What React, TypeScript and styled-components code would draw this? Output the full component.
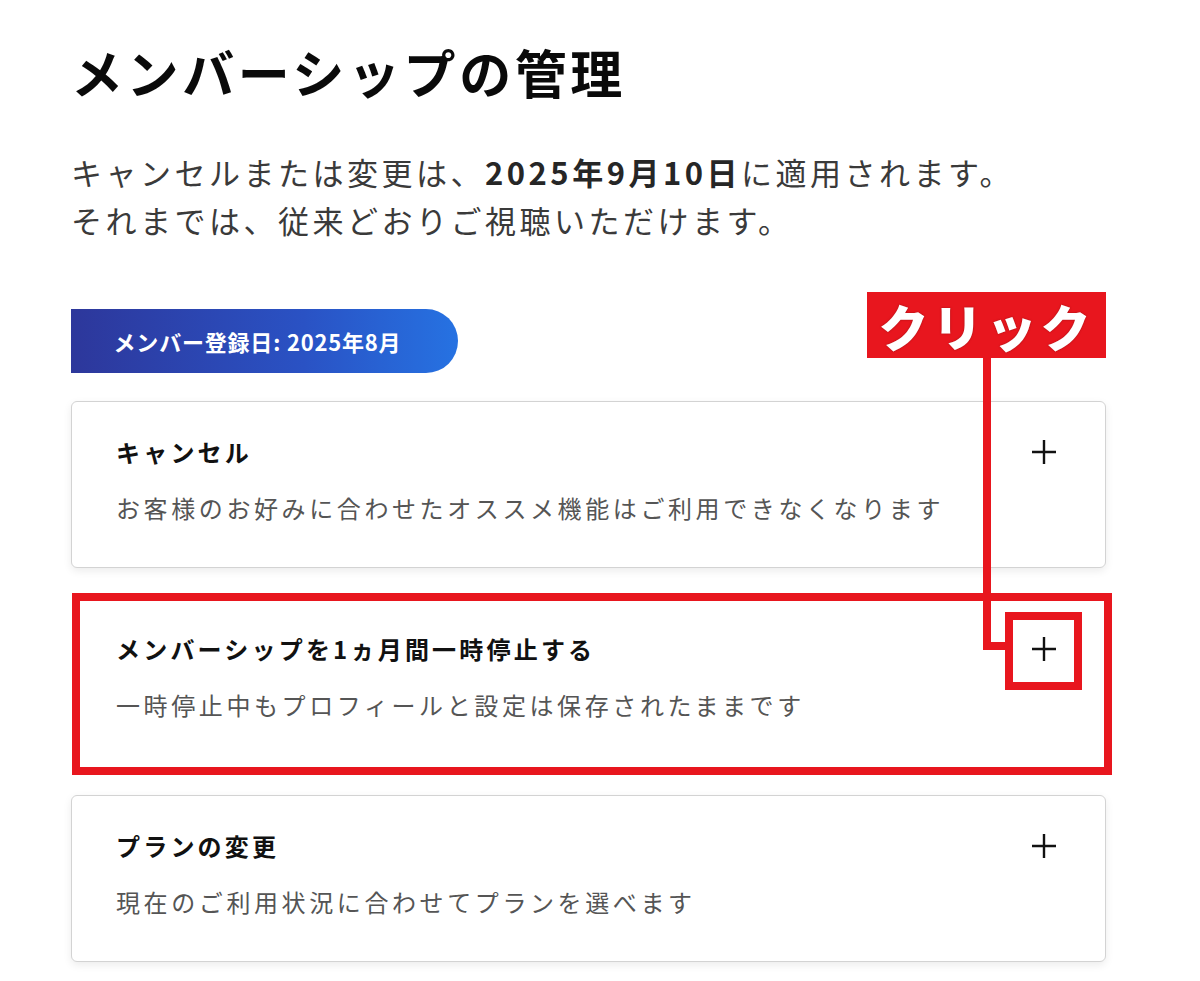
import React from 'react';
import styled, { createGlobalStyle } from 'styled-components';

const GlobalStyle = createGlobalStyle`
  html, body {
    margin: 0;
    padding: 0;
    background: #ffffff;
  }
  body {
    font-family: "Noto Sans CJK JP", "Noto Sans", sans-serif;
    color: #111;
  }
`;

const red = '#e8161e';

const Page = styled.div`
  width: 1035px;
  padding: 34px 0 40px 71px;
  position: relative;
`;

const Title = styled.h1`
  margin: 0;
  font-size: 52px;
  line-height: 76px;
  font-weight: 700;
  letter-spacing: 3.6px;
  color: #0a0a0a;
`;

const Lead = styled.p`
  margin: 38px 0 0;
  font-size: 31px;
  line-height: 48px;
  letter-spacing: 3.5px;
  color: #3a3a3a;

  strong {
    font-weight: 700;
    color: #262626;
  }
`;

const BadgeRow = styled.div`
  display: flex;
  justify-content: space-between;
  align-items: flex-start;
  margin-top: 65px;
`;

const Badge = styled.div`
  width: 387px;
  height: 64px;
  display: flex;
  align-items: center;
  justify-content: center;
  border-radius: 0 32px 32px 0;
  background: linear-gradient(90deg, #2d379b 0%, #2a52c4 60%, #2672e2 100%);
  color: #fff;
  font-size: 22px;
  font-weight: 700;
  letter-spacing: 0.8px;
  box-sizing: border-box;
  padding-right: 14px;
`;

const ClickLabel = styled.div`
  margin-top: -17px;
  width: 239px;
  height: 66px;
  background: ${red};
  color: #fff;
  font-size: 50px;
  font-weight: 900;
  line-height: 66px;
  letter-spacing: 4px;
  text-align: center;
  text-shadow: 0 0 2px rgba(80, 0, 0, 0.5);
`;

const List = styled.div`
  position: relative;
  display: flex;
  flex-direction: column;
  gap: 30px;
  margin-top: 28px;
`;

const Card = styled.div<{ $highlight?: boolean }>`
  position: relative;
  display: flex;
  justify-content: space-between;
  align-items: flex-start;
  height: 167px;
  box-sizing: border-box;
  padding: 32px 48px 0 44px;
  background: #fff;
  border: 1px solid ${(p) => (p.$highlight ? 'transparent' : '#d3d3d3')};
  border-radius: 6px;
  box-shadow: ${(p) => (p.$highlight ? 'none' : '0 3px 8px rgba(0, 0, 0, 0.08)')};

  ${(p) =>
    p.$highlight &&
    `
    &::after {
      content: '';
      position: absolute;
      top: -6px;
      left: 0;
      right: -7px;
      bottom: -11px;
      border: 8px solid ${red};
      pointer-events: none;
    }
  `}
`;

const CardText = styled.div`
  display: flex;
  flex-direction: column;
  gap: 20px;
`;

const CardTitle = styled.div`
  font-size: 24px;
  line-height: 36px;
  font-weight: 700;
  letter-spacing: 3.2px;
  color: #111;
`;

const CardDesc = styled.div`
  font-size: 24px;
  line-height: 36px;
  letter-spacing: 3.6px;
  color: #555;
`;

const PlusButton = styled.div<{ $highlight?: boolean }>`
  position: relative;
  width: 26px;
  height: 26px;
  margin-top: 5px;

  ${(p) =>
    p.$highlight &&
    `
    &::after {
      content: '';
      position: absolute;
      left: -26px;
      top: -24px;
      width: 77px;
      height: 78px;
      box-sizing: border-box;
      border: 8px solid ${red};
    }
  `}
`;

const ConnectorV = styled.div`
  position: absolute;
  left: 912px;
  top: -43px;
  width: 8px;
  height: 292px;
  background: ${red};
  z-index: 2;
`;

const ConnectorH = styled.div`
  position: absolute;
  left: 912px;
  top: 241px;
  width: 24px;
  height: 8px;
  background: ${red};
  z-index: 2;
`;

const Plus = () => (
  <svg width="26" height="26" viewBox="0 0 26 26">
    <path d="M13 1v24M1 13h24" stroke="#111" strokeWidth="2.4" fill="none" />
  </svg>
);

const items = [
  {
    title: 'キャンセル',
    desc: 'お客様のお好みに合わせたオススメ機能はご利用できなくなります',
  },
  {
    title: 'メンバーシップを1ヵ月間一時停止する',
    desc: '一時停止中もプロフィールと設定は保存されたままです',
    highlight: true,
  },
  {
    title: 'プランの変更',
    desc: '現在のご利用状況に合わせてプランを選べます',
  },
];

const App: React.FC = () => {
  return (
    <Page>
      <GlobalStyle />
      <Title>メンバーシップの管理</Title>
      <Lead>
        キャンセルまたは変更は、<strong>2025年9月10日</strong>に適用されます。
        <br />
        それまでは、従来どおりご視聴いただけます。
      </Lead>

      <BadgeRow>
        <Badge>メンバー登録日: 2025年8月</Badge>
        <ClickLabel>クリック</ClickLabel>
      </BadgeRow>

      <List>
        {items.map((item) => (
          <Card key={item.title} $highlight={item.highlight}>
            <CardText>
              <CardTitle>{item.title}</CardTitle>
              <CardDesc>{item.desc}</CardDesc>
            </CardText>
            <PlusButton $highlight={item.highlight}>
              <Plus />
            </PlusButton>
          </Card>
        ))}
        <ConnectorV />
        <ConnectorH />
      </List>
    </Page>
  );
};

export default App;
